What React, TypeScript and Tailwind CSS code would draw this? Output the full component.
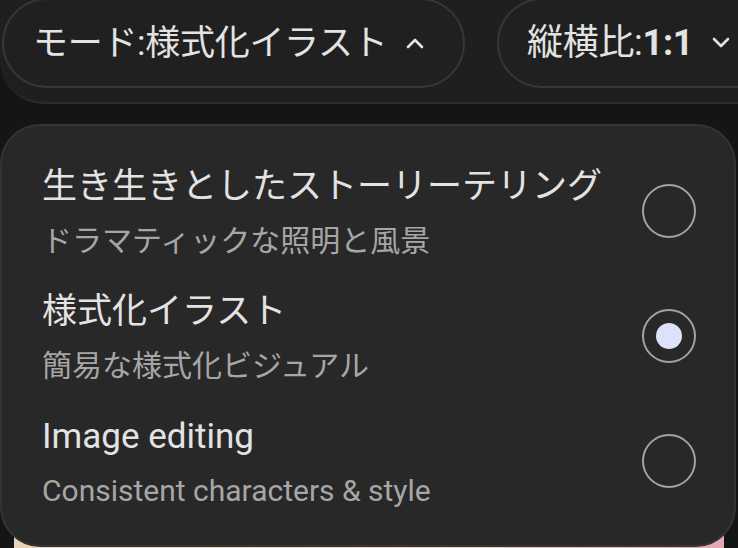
import React from "react";

const options = [
  { title: "生き生きとしたストーリーテリング", sub: "ドラマティックな照明と風景", selected: false },
  { title: "様式化イラスト", sub: "簡易な様式化ビジュアル", selected: true },
  { title: "Image editing", sub: "Consistent characters & style", selected: false },
];

function Chevron({ up }: { up?: boolean }) {
  return (
    <svg width="20" height="12" viewBox="0 0 20 12" className="shrink-0">
      <path
        d={up ? "M3 10 L10 3 L17 10" : "M3 2 L10 9 L17 2"}
        fill="none"
        stroke="#e3e3e3"
        strokeWidth="2.6"
        strokeLinecap="round"
        strokeLinejoin="round"
      />
    </svg>
  );
}

function Radio({ checked }: { checked: boolean }) {
  return (
    <div className="w-[54px] h-[54px] mb-[6px] rounded-full border-2 border-[#a3a3a3] flex items-center justify-center shrink-0">
      {checked && <div className="w-[26px] h-[26px] rounded-full bg-[#dde1fb]" />}
    </div>
  );
}

export default function App() {
  return (
    <div
      className="relative w-[738px] h-[548px] overflow-hidden bg-[#151515] text-[#e3e3e3]"
      style={{ fontFamily: "Roboto, 'Noto Sans CJK JP', sans-serif" }}
    >
      {/* toolbar */}
      <div className="w-[800px] h-[106px] -mt-[2px] bg-[#1f1f1f] border-b-2 border-[#2c2c2c] rounded-bl-[44px] flex items-start gap-[32px] pl-[2px]">
        <button className="h-[90px] w-[463px] rounded-full border-2 border-[#363636] bg-[#202020] flex items-center pl-[29px] gap-[18px]">
          <span className="text-[35px] leading-none tracking-[-0.3px]">モード:様式化イラスト</span>
          <Chevron up />
        </button>
        <button className="h-[90px] w-[300px] rounded-full border-2 border-[#363636] bg-[#202020] flex items-center pl-[28px] gap-[18px]">
          <span className="text-[36px] leading-none tracking-[-0.3px]">
            縦横比:<span className="font-bold">1:1</span>
          </span>
          <Chevron />
        </button>
      </div>

      {/* image peeking behind the menu */}
      <div className="mt-[420px] mx-[14px] h-[40px] rounded-t-[10px] bg-gradient-to-r from-[#e8d4b8] via-[#efcfc8] to-[#e6a9b4]" />

      {/* dropdown menu */}
      <div className="absolute left-0 top-[124px] w-[736px] h-[423px] rounded-[40px] bg-[#282828] border-2 border-[#343434] pt-[25px] pl-[40px] pr-[38px]">
        {options.map((o) => (
          <div key={o.title} className="h-[125px] flex items-center justify-between">
            <div className="flex flex-col">
              <span className="text-[35px] leading-[48px] text-[#e3e3e3]">{o.title}</span>
              <span className="text-[30px] leading-[48px] mt-[6px] text-[#a6a6a6]">{o.sub}</span>
            </div>
            <Radio checked={o.selected} />
          </div>
        ))}
      </div>
    </div>
  );
}
